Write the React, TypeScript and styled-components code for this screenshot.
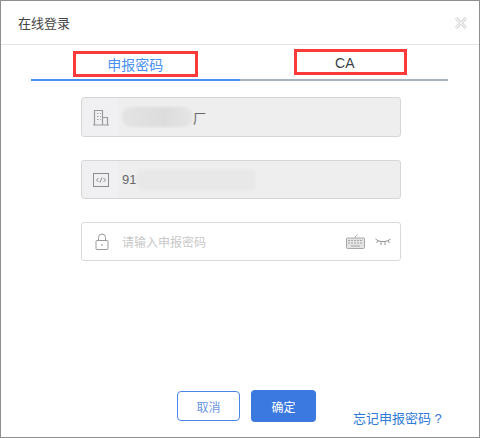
import React, { FunctionComponent } from "react";
import styled, { createGlobalStyle } from "styled-components";

const GlobalStyle = createGlobalStyle`
  html, body {
    margin: 0;
    padding: 0;
    background: #fff;
  }
  * {
    box-sizing: border-box;
  }
`;

const Dialog = styled.div`
  width: 480px;
  height: 438px;
  display: flex;
  flex-direction: column;
  border: 1px solid #8e8e8e;
  background: #fff;
  font-family: "Liberation Sans", "Noto Sans CJK SC", sans-serif;
  overflow: hidden;
`;

const Header = styled.div`
  height: 44px;
  flex: none;
  display: flex;
  align-items: center;
  justify-content: space-between;
  padding: 0 12px 0 17px;
  border-bottom: 1px solid #e4e4e4;
`;

const Title = styled.span`
  font-size: 13px;
  color: #444;
`;

const CloseIcon = styled.svg`
  width: 12px;
  height: 12px;
  display: block;
`;

const Tabs = styled.div`
  display: flex;
  margin: 0 31px 0 30px;
  height: 36px;
  flex: none;
`;

const Tab = styled.div<{ $active?: boolean }>`
  flex: 1;
  display: flex;
  justify-content: center;
  border-bottom: 2px solid ${(p) => (p.$active ? "#4a90f0" : "#a9b4bb")};
  padding-top: ${(p) => (p.$active ? 6 : 4)}px;
`;

const TabLabel = styled.div<{ $active?: boolean; $offset: number; $width: number; $shift: number }>`
  width: ${(p) => p.$width}px;
  height: 26px;
  border: 3px solid #fb3a3a;
  display: flex;
  align-items: center;
  justify-content: center;
  margin-left: ${(p) => p.$offset}px;
  padding-right: ${(p) => p.$shift}px;
  padding-top: ${(p) => (p.$active ? 0 : 2)}px;
  font-size: 14px;
  color: ${(p) => (p.$active ? "#4a90f0" : "#3a3f4a")};
`;

const Form = styled.div`
  display: flex;
  flex-direction: column;
  gap: 23px;
  margin: 16px 0 0 80px;
  width: 320px;
`;

const Field = styled.div<{ $disabled?: boolean; $tall?: boolean }>`
  height: ${(p) => (p.$tall ? 40 : 39)}px;
  display: flex;
  align-items: stretch;
  border: 1px solid ${(p) => (p.$disabled ? "#d6d6d6" : "#dadada")};
  border-radius: 3px;
  background: ${(p) => (p.$disabled ? "#eeeeee" : "#fff")};
  overflow: hidden;
`;

const IconBox = styled.div<{ $disabled?: boolean }>`
  width: 36px;
  flex: none;
  display: flex;
  align-items: center;
  justify-content: center;
  background: ${(p) => (p.$disabled ? "#f0f0f3" : "transparent")};
  padding-left: ${(p) => (p.$disabled ? 1 : 3)}px;
`;

const Value = styled.div`
  flex: 1;
  display: flex;
  align-items: center;
  padding-left: 4px;
  font-size: 13px;
  color: #666;
  min-width: 0;
`;

const Placeholder = styled(Value)`
  font-size: 12px;
  color: #c8c8c8;
`;

const Blur = styled.span<{ $width: number; $height: number }>`
  display: block;
  flex: none;
  width: ${(p) => p.$width}px;
  height: ${(p) => p.$height}px;
  border-radius: 9px;
  background: linear-gradient(90deg, #e4e4e4, #dcdcdc 60%, #e6e6e6);
  filter: blur(1px);
`;

const SoftBlur = styled(Blur)`
  background: #e8e8e8;
  border-radius: 8px 0 0 8px;
`;

const Trailing = styled.div`
  display: flex;
  align-items: center;
  gap: 10px;
  padding-right: 9px;
`;

const Footer = styled.div`
  margin-top: auto;
  height: 47px;
  flex: none;
  display: flex;
  align-items: flex-start;
  padding-left: 176px;
`;

const CancelButton = styled.button`
  width: 63px;
  height: 30px;
  margin-top: 1px;
  border: 1px solid #4a86e8;
  border-radius: 4px;
  background: #fff;
  color: #6a96e6;
  font: inherit;
  font-size: 12px;
  padding: 0;
`;

const ConfirmButton = styled.button`
  width: 65px;
  height: 32px;
  margin-left: 11px;
  border: 0;
  border-radius: 4px;
  background: #3b78e0;
  color: #fff;
  font: inherit;
  font-size: 12px;
  padding: 0;
`;

const ForgotLink = styled.a`
  margin: 20px 0 0 37px;
  font-size: 13px;
  line-height: 18px;
  color: #2f7ad6;
  white-space: nowrap;
`;

const App: FunctionComponent = () => {
  return (
    <>
      <GlobalStyle />
      <Dialog>
        <Header>
          <Title>在线登录</Title>
          <CloseIcon viewBox="0 0 12 12">
            <g fill="none">
              <path d="M1 1l10 10M11 1L1 11" stroke="#cfcfcf" strokeWidth="3" />
              <path d="M1 1l10 10M11 1L1 11" stroke="#f6f6f6" strokeWidth="1.2" />
            </g>
          </CloseIcon>
        </Header>
        <Tabs>
          <Tab $active>
            <TabLabel $active $width={125} $offset={0} $shift={0}>
              申报密码
            </TabLabel>
          </Tab>
          <Tab>
            <TabLabel $width={113} $offset={14} $shift={12}>
              CA
            </TabLabel>
          </Tab>
        </Tabs>
        <Form>
          <Field $disabled $tall>
            <IconBox $disabled>
              <svg width="16" height="17" viewBox="0 0 16 17" fill="none" stroke="#9b9b9b">
                <path d="M1.5 16V1.5h8V16M9.5 8.5h5V16M0 16h16" strokeWidth="1.2" />
                <path d="M4 4.5h1.5M7 4.5h0.8M4 7.5h1.5M7 7.5h0.8M4 10.5h1.5M7 10.5h0.8" />
              </svg>
            </IconBox>
            <Value>
              <Blur $width={71} $height={20} />
              <span>厂</span>
            </Value>
          </Field>
          <Field $disabled>
            <IconBox $disabled>
              <svg width="16" height="14" viewBox="0 0 16 14" fill="none" stroke="#8c8c8c">
                <rect x="0.5" y="0.5" width="15" height="13" />
                <path d="M5.5 5L3.5 7l2 2M10.5 5l2 2-2 2M9 4.5L7 9.5" />
              </svg>
            </IconBox>
            <Value>
              <span>91</span>
              <SoftBlur $width={119} $height={20} />
            </Value>
          </Field>
          <Field>
            <IconBox>
              <svg width="14" height="17" viewBox="0 0 14 17" fill="none" stroke="#9a9a9a">
                <rect x="1" y="7.5" width="12" height="9" rx="1" />
                <path d="M3.5 7.5V4.5a3.5 3.5 0 0 1 7 0v3M7 11v2" />
              </svg>
            </IconBox>
            <Placeholder>请输入申报密码</Placeholder>
            <Trailing>
              <svg width="19" height="15" viewBox="0 0 19 15" fill="none" stroke="#a8a8a8">
                <path d="M9.5 4V2.5c0-1 2-1 2-2" />
                <rect x="0.5" y="4" width="18" height="10.5" rx="1" fill="#e4e4e4" />
                <path d="M2 6.5h15M2 9h15" strokeDasharray="2 1" />
                <path d="M5 12h9" />
              </svg>
              <svg width="16" height="8" viewBox="0 0 16 8" fill="none" stroke="#8f8f8f">
                <path d="M0.5 1c4 3.5 11 3.5 15 0M3 3L1.5 5M6 4.2V7M10 4.2V7M13 3l1.5 2" />
              </svg>
            </Trailing>
          </Field>
        </Form>
        <Footer>
          <CancelButton>取消</CancelButton>
          <ConfirmButton>确定</ConfirmButton>
          <ForgotLink>忘记申报密码 ?</ForgotLink>
        </Footer>
      </Dialog>
    </>
  );
};

export default App;
